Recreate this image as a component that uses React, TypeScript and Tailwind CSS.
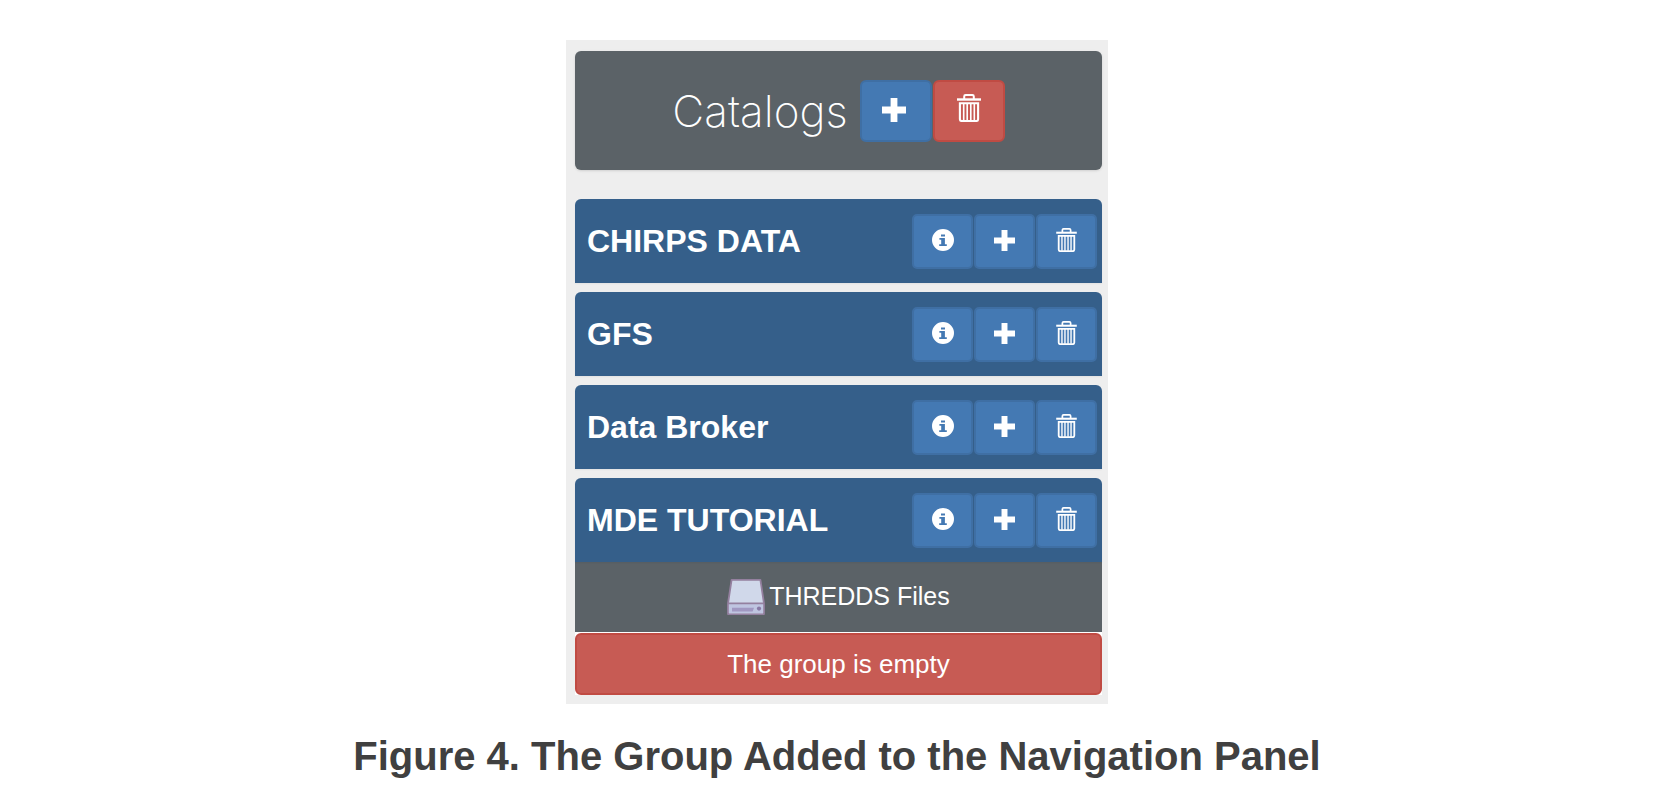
import React from "react";

const groups = ["CHIRPS DATA", "GFS", "Data Broker", "MDE TUTORIAL"];

type IconProps = { className: string };

function PlusIcon({ className }: IconProps) {
  return (
    <svg viewBox="0 0 24 24" className={className} fill="currentColor" aria-hidden="true">
      <path d="M8.6 0h6.8v8.6H24v6.8h-8.6V24H8.6v-8.6H0V8.6h8.6z" />
    </svg>
  );
}

function TrashIcon({ className }: IconProps) {
  return (
    <svg viewBox="0 0 24 28" className={className} fill="none" stroke="currentColor" aria-hidden="true">
      <path d="M0 5.5h24" strokeWidth="2.4" />
      <path d="M7.2 5V2.4Q7.2 1 8.6 1h6.8q1.4 0 1.4 1.4V5" strokeWidth="2" />
      <path d="M2.9 9.3h18.2v15.9q0 1.8-1.8 1.8H4.7q-1.8 0-1.8-1.8z" strokeWidth="2.1" />
      <path d="M6.7 9v17.6M10.2 9v17.6M13.8 9v17.6M17.3 9v17.6" strokeWidth="1.6" />
    </svg>
  );
}

function InfoIcon({ className }: IconProps) {
  return (
    <svg viewBox="0 0 22 22" className={className} fill="currentColor" aria-hidden="true">
      <path
        fillRule="evenodd"
        d="M11 0a11 11 0 1 0 0 22a11 11 0 0 0 0-22zM9 5.4h4v2.1H9zM7.4 9h5.5v6.2h1.9v1.7H7.2v-1.7h2v-4.5H7.4z"
      />
    </svg>
  );
}

function DriveIcon({ className }: IconProps) {
  return (
    <svg viewBox="0 0 38 36" className={className} aria-hidden="true">
      <path d="M4.6.9h28.8L37 24.5v10.6H1V24.5z" fill="#d0d8ea" stroke="#94809f" strokeWidth="1.8" strokeLinejoin="round" />
      <path d="M1.9 24.6h34.2v9.6H1.9z" fill="#bfc5e1" />
      <path d="M1 24.4h36" stroke="#94809f" strokeWidth="1.6" />
      <path d="M5 28.8h22l-1.4 3.6H5z" fill="#a198c2" />
      <circle cx="32" cy="29.6" r="2.1" fill="#8879a5" />
    </svg>
  );
}

const groupButton =
  "flex h-[55px] w-[61px] items-center justify-center rounded-[5px] border-2 border-[#3f6fa4] bg-[#4479b3] pb-0.5 text-white";

export default function App() {
  return (
    <main className="flex min-h-screen flex-col items-center bg-white pt-10 pr-4 pl-[18px] font-['Liberation_Sans',Arial,sans-serif]">
      <figure className="flex w-full flex-col items-center">
        <div className="w-full max-w-[542px] bg-[#eeeeee] pt-[11px] pr-1.5 pb-[9px] pl-[9px]">
          <header className="flex h-[119px] items-center justify-center gap-3 rounded-md bg-[#5b6267] text-white shadow-sm">
            <h1 className="font-['Inter',sans-serif] text-[44px] leading-none font-extralight">Catalogs</h1>
            <div className="flex gap-px">
              <button type="button" aria-label="Add catalog" className="flex h-[62px] w-[72px] items-center justify-center rounded-md border-2 border-[#3f6fa4] bg-[#4479b3] pr-1 pb-0.5">
                <PlusIcon className="size-6" />
              </button>
              <button type="button" aria-label="Delete catalog" className="flex h-[62px] w-[72px] items-center justify-center rounded-md border-2 border-[#c04b43] bg-[#c75b54] pb-1.5">
                <TrashIcon className="h-7 w-6" />
              </button>
            </div>
          </header>

          <ul className="mt-[29px] flex flex-col gap-[9px]">
            {groups.map((name) => (
              <li key={name} className="flex h-[84px] items-center justify-between rounded-t-md bg-[#355f8a] pr-[5px] pl-3 text-white shadow-xs">
                <h2 className="text-[32px] leading-none font-bold">{name}</h2>
                <div className="flex gap-px">
                  <button type="button" aria-label={`About ${name}`} className={groupButton}>
                    <InfoIcon className="size-[22px]" />
                  </button>
                  <button type="button" aria-label={`Add to ${name}`} className={groupButton}>
                    <PlusIcon className="size-[21px]" />
                  </button>
                  <button type="button" aria-label={`Delete ${name}`} className={groupButton}>
                    <TrashIcon className="h-6 w-[21px]" />
                  </button>
                </div>
              </li>
            ))}
          </ul>

          <div className="bg-white">
            <div className="flex h-[70px] items-center justify-center bg-[#5b6267] text-[25px] text-white">
              <DriveIcon className="mr-1 h-9 w-[38px]" />
              <span>THREDDS Files</span>
            </div>
            <p className="mt-px flex h-[62px] items-center justify-center rounded-md border-2 border-[#c04b43] bg-[#c75b54] text-[26px] text-white">
              The group is empty
            </p>
          </div>
        </div>
        <figcaption className="mt-7 text-center text-[40px] leading-[48px] font-bold text-[#404040]">
          Figure 4. The Group Added to the Navigation Panel
        </figcaption>
      </figure>
    </main>
  );
}
